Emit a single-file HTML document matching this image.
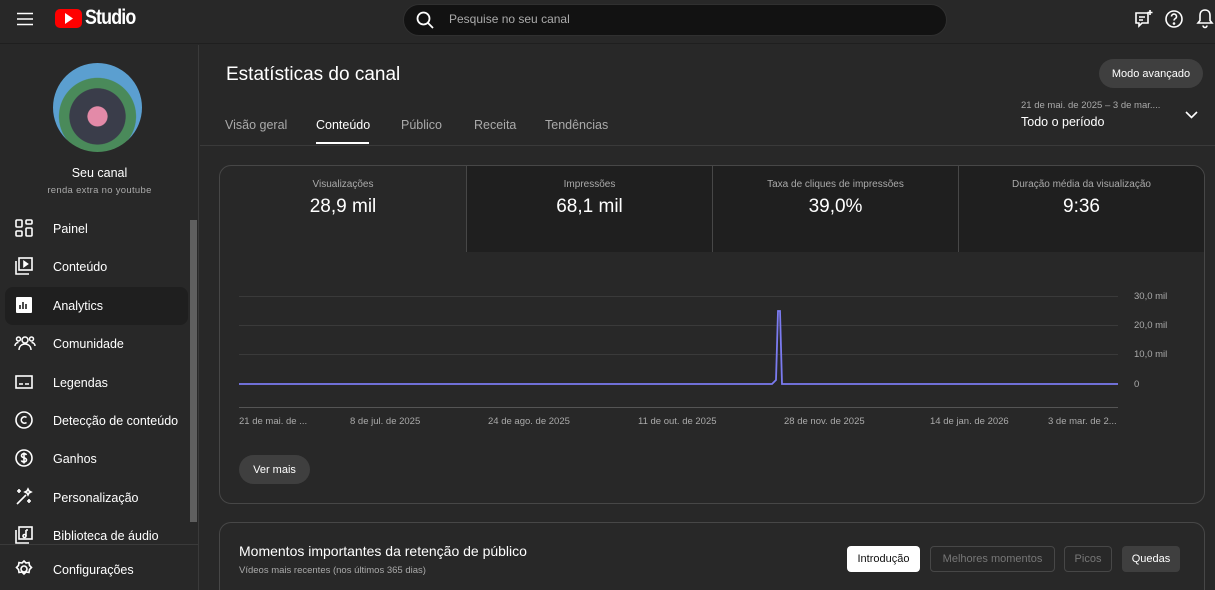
<!DOCTYPE html>
<html><head><meta charset="utf-8"><style>
*{box-sizing:border-box;margin:0;padding:0}
html,body{width:1215px;height:590px;overflow:hidden}
body{background:#282828;color:#fff;font-family:"Liberation Sans",sans-serif;position:relative}
.abs{position:absolute}
.top{left:0;top:0;width:1215px;height:44px;background:#282828;border-bottom:1px solid #1f1f1f}
.search{left:403px;top:4px;width:544px;height:32px;background:#121212;border-radius:16px;border:1px solid #303030}
.side{left:0;top:45px;width:199px;height:545px;border-right:1px solid #3a3a3a}
.nav{position:absolute;left:0;width:190px;height:38px;font-size:12.5px;display:flex;align-items:center}
.nav svg{position:absolute;left:14px}
.nav span{position:absolute;left:53px;top:13px}
.tab{font-size:12.5px;color:#aaa;top:118px}
.card{border:1px solid #474747;border-radius:12px}
.m{top:166px;width:246px;height:86px;text-align:center}
.m .l{font-size:10px;color:#aaa;margin-top:13px}
.m .v{font-size:19px;margin-top:6px}
.grid{left:239px;width:879px;height:1px;background:#3a3a3a}
.yl{left:1134px;font-size:9.5px;color:#aaa}
.xl{top:416px;font-size:9.5px;color:#aaa}
.chip{top:546px;height:26px;border-radius:4px;font-size:11px;display:flex;align-items:center;justify-content:center}
</style></head><body>
<div class="abs top"></div>
<svg class="abs" style="left:16px;top:12px" width="18" height="14"><path d="M1 1.5h16M1 7h16M1 12.5h16" stroke="#fff" stroke-width="1.6"/></svg>
<div class="abs" style="left:55px;top:9px;width:27px;height:19px;background:#f00;border-radius:5px"></div>
<svg class="abs" style="left:65px;top:13px" width="9" height="11"><path d="M0 0L8 5.5L0 11z" fill="#fff"/></svg>
<div class="abs" style="left:85px;top:6px;font-size:21px;font-weight:bold;letter-spacing:-1px;transform:scaleX(.85);transform-origin:left">Studio</div>
<div class="abs search"></div>
<svg class="abs" style="left:416px;top:11px" width="18" height="18"><circle cx="7.5" cy="7.5" r="6" stroke="#fff" stroke-width="1.8" fill="none"/><path d="M12 12l5 5" stroke="#fff" stroke-width="1.8"/></svg>
<div class="abs" style="left:449px;top:12px;font-size:12px;color:#aaa">Pesquise no seu canal</div>
<svg class="abs" style="left:1134px;top:9px" width="20" height="20" fill="none" stroke="#fff" stroke-width="1.6"><path d="M2 4h12v10H8l-3 3v-3H2z"/><path d="M5 8h6M5 11h4"/><path d="M16 1v5M13.5 3.5h5"/></svg>
<svg class="abs" style="left:1164px;top:9px" width="20" height="20" fill="none" stroke="#fff" stroke-width="1.6"><circle cx="10" cy="10" r="8"/><path d="M7.5 7.5a2.5 2.5 0 1 1 3.5 2.3c-.7.4-1 .9-1 1.7"/><circle cx="10" cy="14.5" r=".5" fill="#fff"/></svg>
<svg class="abs" style="left:1195px;top:8px" width="20" height="22" fill="none" stroke="#fff" stroke-width="1.6"><path d="M10 2c-3.5 0-5 2.5-5 5.5v5L3 15h14l-2-2.5v-5C15 4.5 13.5 2 10 2zM8 17.5a2 2 0 0 0 4 0"/></svg>

<div class="abs side"></div>
<div class="abs" style="left:53px;top:63px;width:89px;height:89px;border-radius:50%;background:radial-gradient(circle at 50% 60%,#e38aa8 0 14%,#3a3d4a 15% 40%,#4a8a5a 41% 55%,#5b9fd0 56%)"></div>
<div class="abs" style="left:0;width:199px;top:166px;text-align:center;font-size:12.5px">Seu canal</div>
<div class="abs" style="left:0;width:199px;top:185px;text-align:center;font-size:9.5px;color:#aaa;letter-spacing:.3px">renda extra no youtube</div>
<div class="abs" style="left:5px;top:287px;width:183px;height:38px;background:#1f1f1f;border-radius:8px"></div>
<div class="abs" style="left:190px;top:220px;width:7px;height:302px;background:#5f5f5f"></div>
<div class="nav" style="top:209px"><svg width="20" height="20" fill="none" stroke="#fff" stroke-width="1.6"><rect x="2" y="2" width="6" height="7" rx="1"/><rect x="12" y="2" width="6" height="4" rx="1"/><rect x="2" y="13" width="6" height="5" rx="1"/><rect x="12" y="10" width="6" height="8" rx="1"/></svg><span>Painel</span></div>
<div class="nav" style="top:247px"><svg width="20" height="20" fill="none" stroke="#fff" stroke-width="1.6"><rect x="5" y="2" width="13" height="12"/><path d="M2 5v13h13"/><path d="M10 5.5v5l3.5-2.5z" fill="#fff"/></svg><span>Conteúdo</span></div>
<div class="nav" style="top:286px"><svg width="20" height="20"><rect x="2" y="2" width="16" height="16" rx="1" fill="#fff"/><path d="M6 14v-4M9 14V7M12 14v-5" stroke="#1f1f1f" stroke-width="1.6"/></svg><span>Analytics</span></div>
<div class="nav" style="top:324px"><svg width="22" height="20" fill="none" stroke="#fff" stroke-width="1.5"><circle cx="11" cy="7" r="3"/><circle cx="4.5" cy="6" r="2"/><circle cx="17.5" cy="6" r="2"/><path d="M5 17c0-4 3-6 6-6s6 2 6 6M1 13c0-2 1.5-3.5 3.5-3.5M21 13c0-2-1.5-3.5-3.5-3.5"/></svg><span>Comunidade</span></div>
<div class="nav" style="top:363px"><svg width="20" height="20" fill="none" stroke="#fff" stroke-width="1.6"><rect x="2" y="4" width="16" height="12"/><path d="M5 12h4M11 12h4"/></svg><span>Legendas</span></div>
<div class="nav" style="top:401px"><svg width="20" height="20" fill="none" stroke="#fff" stroke-width="1.6"><circle cx="10" cy="10" r="8"/><path d="M12.5 7.5a3.2 3.2 0 1 0 0 5"/></svg><span>Detecção de conteúdo</span></div>
<div class="nav" style="top:439px"><svg width="20" height="20" fill="none" stroke="#fff" stroke-width="1.6"><circle cx="10" cy="10" r="8"/><path d="M12.5 7c-.5-1-1.5-1.3-2.5-1.3-1.5 0-2.5.8-2.5 2 0 2.6 5 1.4 5 4.2 0 1.2-1 2-2.5 2-1.2 0-2.2-.5-2.6-1.5M10 4.5v11"/></svg><span>Ganhos</span></div>
<div class="nav" style="top:478px"><svg width="20" height="20" fill="none" stroke="#fff" stroke-width="1.6"><path d="M3 17l9-9"/><path d="M5 2v4M3 4h4M15 12v4M13 14h4M14 2l1 2 2 1-2 1-1 2-1-2-2-1 2-1z"/></svg><span>Personalização</span></div>
<div class="nav" style="top:516px"><svg width="20" height="20" fill="none" stroke="#fff" stroke-width="1.6"><rect x="5" y="2" width="13" height="12"/><path d="M2 5v13h13"/><path d="M12 5v6M12 5h2"/><circle cx="10.5" cy="11" r="1.5"/></svg><span>Biblioteca de áudio</span></div>
<div class="abs" style="left:0;top:544px;width:199px;height:1px;background:#3a3a3a"></div>
<div class="nav" style="top:550px"><svg width="20" height="20" fill="none" stroke="#fff" stroke-width="1.6"><path d="M10 2l2 2 3-.5.5 3 2 2-2 2-.5 3-3-.5-2 2-2-2-3 .5-.5-3-2-2 2-2 .5-3 3 .5z"/><circle cx="10" cy="10" r="3"/></svg><span>Configurações</span></div>

<div class="abs" style="left:226px;top:64px;font-size:19px">Estatísticas do canal</div>
<div class="abs" style="left:1099px;top:59px;width:104px;height:29px;background:#3f3f3f;border-radius:15px;font-size:11px;display:flex;align-items:center;justify-content:center">Modo avançado</div>
<div class="abs" style="left:1021px;top:100px;font-size:9.5px;color:#aaa">21 de mai. de 2025 – 3 de mar....</div>
<div class="abs" style="left:1021px;top:115px;font-size:12.5px">Todo o período</div>
<svg class="abs" style="left:1185px;top:111px" width="13" height="9"><path d="M1 1l5.5 5.5L12 1" stroke="#fff" stroke-width="1.6" fill="none"/></svg>
<div class="abs tab" style="left:225px">Visão geral</div>
<div class="abs tab" style="left:316px;color:#fff">Conteúdo</div>
<div class="abs" style="left:316px;top:142px;width:53px;height:2px;background:#fff"></div>
<div class="abs tab" style="left:401px">Público</div>
<div class="abs tab" style="left:474px">Receita</div>
<div class="abs tab" style="left:545px">Tendências</div>
<div class="abs" style="left:200px;top:145px;width:1015px;height:1px;background:#3a3a3a"></div>

<div class="abs card" style="left:219px;top:165px;width:986px;height:339px"></div>
<div class="abs m" style="left:220px;border-top-left-radius:11px"><div class="l">Visualizações</div><div class="v">28,9 mil</div></div>
<div class="abs m" style="left:466px;background:#1f1f1f;border-left:1px solid #474747"><div class="l">Impressões</div><div class="v">68,1 mil</div></div>
<div class="abs m" style="left:712px;background:#1f1f1f;border-left:1px solid #474747"><div class="l">Taxa de cliques de impressões</div><div class="v">39,0%</div></div>
<div class="abs m" style="left:958px;background:#1f1f1f;border-left:1px solid #474747;border-top-right-radius:11px;width:246px"><div class="l">Duração média da visualização</div><div class="v">9:36</div></div>

<div class="abs grid" style="top:296px"></div>
<div class="abs grid" style="top:325px"></div>
<div class="abs grid" style="top:354px"></div>
<div class="abs grid" style="top:407px;background:#555"></div>
<div class="abs yl" style="top:291px">30,0 mil</div>
<div class="abs yl" style="top:320px">20,0 mil</div>
<div class="abs yl" style="top:349px">10,0 mil</div>
<div class="abs yl" style="top:379px">0</div>
<svg class="abs" style="left:239px;top:300px" width="880" height="90"><path d="M0 84H533L537 80L539 11L541 11L543 84H879" stroke="#7b7bf0" stroke-width="1.8" fill="none"/></svg>
<div class="abs xl" style="left:239px">21 de mai. de ...</div>
<div class="abs xl" style="left:350px">8 de jul. de 2025</div>
<div class="abs xl" style="left:488px">24 de ago. de 2025</div>
<div class="abs xl" style="left:638px">11 de out. de 2025</div>
<div class="abs xl" style="left:784px">28 de nov. de 2025</div>
<div class="abs xl" style="left:930px">14 de jan. de 2026</div>
<div class="abs xl" style="left:1048px">3 de mar. de 2...</div>
<div class="abs" style="left:239px;top:455px;width:71px;height:29px;background:#3f3f3f;border-radius:15px;font-size:11px;display:flex;align-items:center;justify-content:center">Ver mais</div>

<div class="abs card" style="left:219px;top:522px;width:986px;height:68px;border-bottom:none;border-bottom-left-radius:0;border-bottom-right-radius:0"></div>
<div class="abs" style="left:239px;top:543px;font-size:14px">Momentos importantes da retenção de público</div>
<div class="abs" style="left:239px;top:565px;font-size:9.5px;color:#aaa">Vídeos mais recentes (nos últimos 365 dias)</div>
<div class="abs chip" style="left:847px;width:73px;background:#fff;color:#0f0f0f">Introdução</div>
<div class="abs chip" style="left:930px;width:125px;border:1px solid #474747;color:#777">Melhores momentos</div>
<div class="abs chip" style="left:1064px;width:48px;border:1px solid #474747;color:#777">Picos</div>
<div class="abs chip" style="left:1122px;width:58px;background:#3f3f3f">Quedas</div>
</body></html>
